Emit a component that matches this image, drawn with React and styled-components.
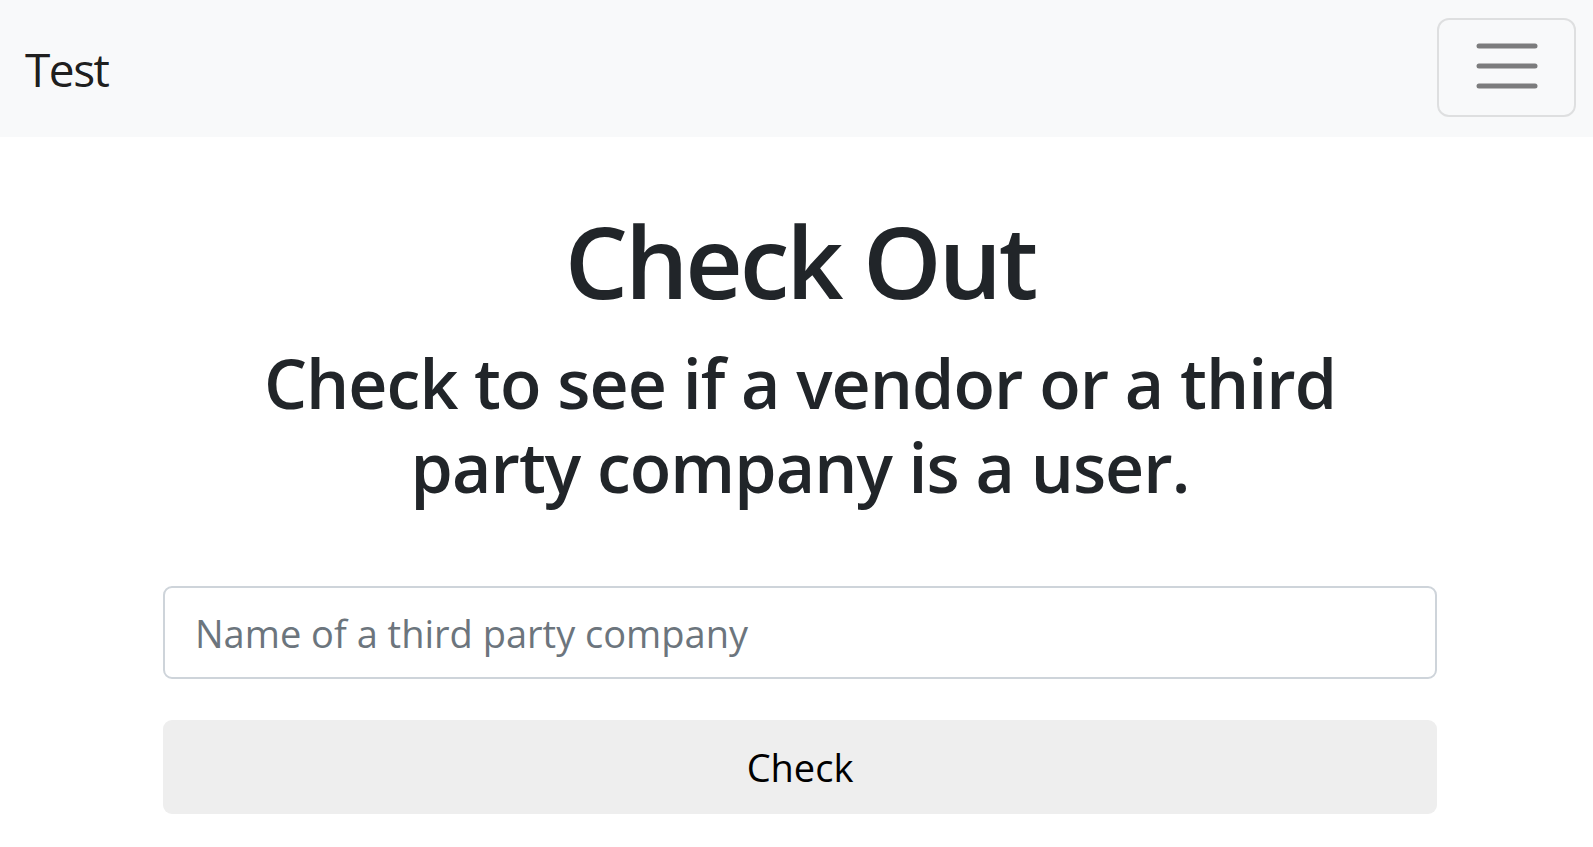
import React from "react";
import styled, { createGlobalStyle } from "styled-components";

const GlobalStyle = createGlobalStyle`
  * { box-sizing: border-box; }
  html, body { margin: 0; padding: 0; background: #ffffff; }
  body {
    font-family: "Open Sans", "Noto Sans", sans-serif;
    color: #212529;
  }
`;

const NavBar = styled.nav`
  height: 137px;
  background: #f8f9fa;
  display: flex;
  align-items: center;
  justify-content: space-between;
  padding: 0 17px 0 25px;
`;

const Brand = styled.a`
  font-size: 46px;
  line-height: 1;
  color: rgba(0, 0, 0, 0.9);
  text-decoration: none;
  letter-spacing: -1.5px;
  margin-top: 0;
`;

const Toggler = styled.button`
  width: 139px;
  height: 99px;
  margin-top: -3px;
  border: 2px solid rgba(0, 0, 0, 0.1);
  border-radius: 12px;
  background: transparent;
  display: flex;
  align-items: center;
  justify-content: center;
  padding: 0;
  cursor: pointer;
`;

const Main = styled.main`
  width: 1274px;
  margin-left: 163px;
  display: flex;
  flex-direction: column;
  align-items: stretch;
`;

const Title = styled.h1`
  margin: 63px 0 0;
  font-size: 100px;
  line-height: 120px;
  font-weight: 600;
  letter-spacing: -3.2px;
  text-align: center;
  color: #212529;
`;

const Subtitle = styled.h2`
  margin: 21px auto 0;
  max-width: 1140px;
  font-size: 68px;
  line-height: 84px;
  font-weight: 600;
  letter-spacing: -0.95px;
  text-align: center;
  color: #212529;
`;

const Field = styled.input`
  margin-top: 77px;
  height: 93px;
  width: 100%;
  border: 2px solid #ced4da;
  border-radius: 9px;
  padding: 0 30px;
  font-family: "Open Sans", "Noto Sans", sans-serif;
  font-size: 38px;
  letter-spacing: 0;
  color: #495057;
  background: #fff;
  outline: none;
  &::placeholder {
    color: #6c757d;
    opacity: 1;
  }
`;

const CheckButton = styled.button`
  margin-top: 41px;
  height: 94px;
  width: 100%;
  border: none;
  border-radius: 9px;
  background: #eeeeee;
  font-family: "Open Sans", "Noto Sans", sans-serif;
  font-size: 38px;
  letter-spacing: 0;
  color: #000;
  cursor: pointer;
`;

function HamburgerIcon() {
  return (
    <svg width="64" height="48" viewBox="0 0 64 48" aria-hidden="true">
      <g stroke="rgba(0,0,0,0.5)" strokeWidth="5" strokeLinecap="round">
        <line x1="4" y1="3" x2="60" y2="3" />
        <line x1="4" y1="23" x2="60" y2="23" />
        <line x1="4" y1="43" x2="60" y2="43" />
      </g>
    </svg>
  );
}

export default function App() {
  return (
    <>
      <GlobalStyle />
      <NavBar>
        <Brand href="#">Test</Brand>
        <Toggler aria-label="Toggle navigation">
          <HamburgerIcon />
        </Toggler>
      </NavBar>
      <Main>
        <Title>Check Out</Title>
        <Subtitle>
          Check to see if a vendor or a third party company is a user.
        </Subtitle>
        <Field type="text" placeholder="Name of a third party company" />
        <CheckButton type="button">Check</CheckButton>
      </Main>
    </>
  );
}
